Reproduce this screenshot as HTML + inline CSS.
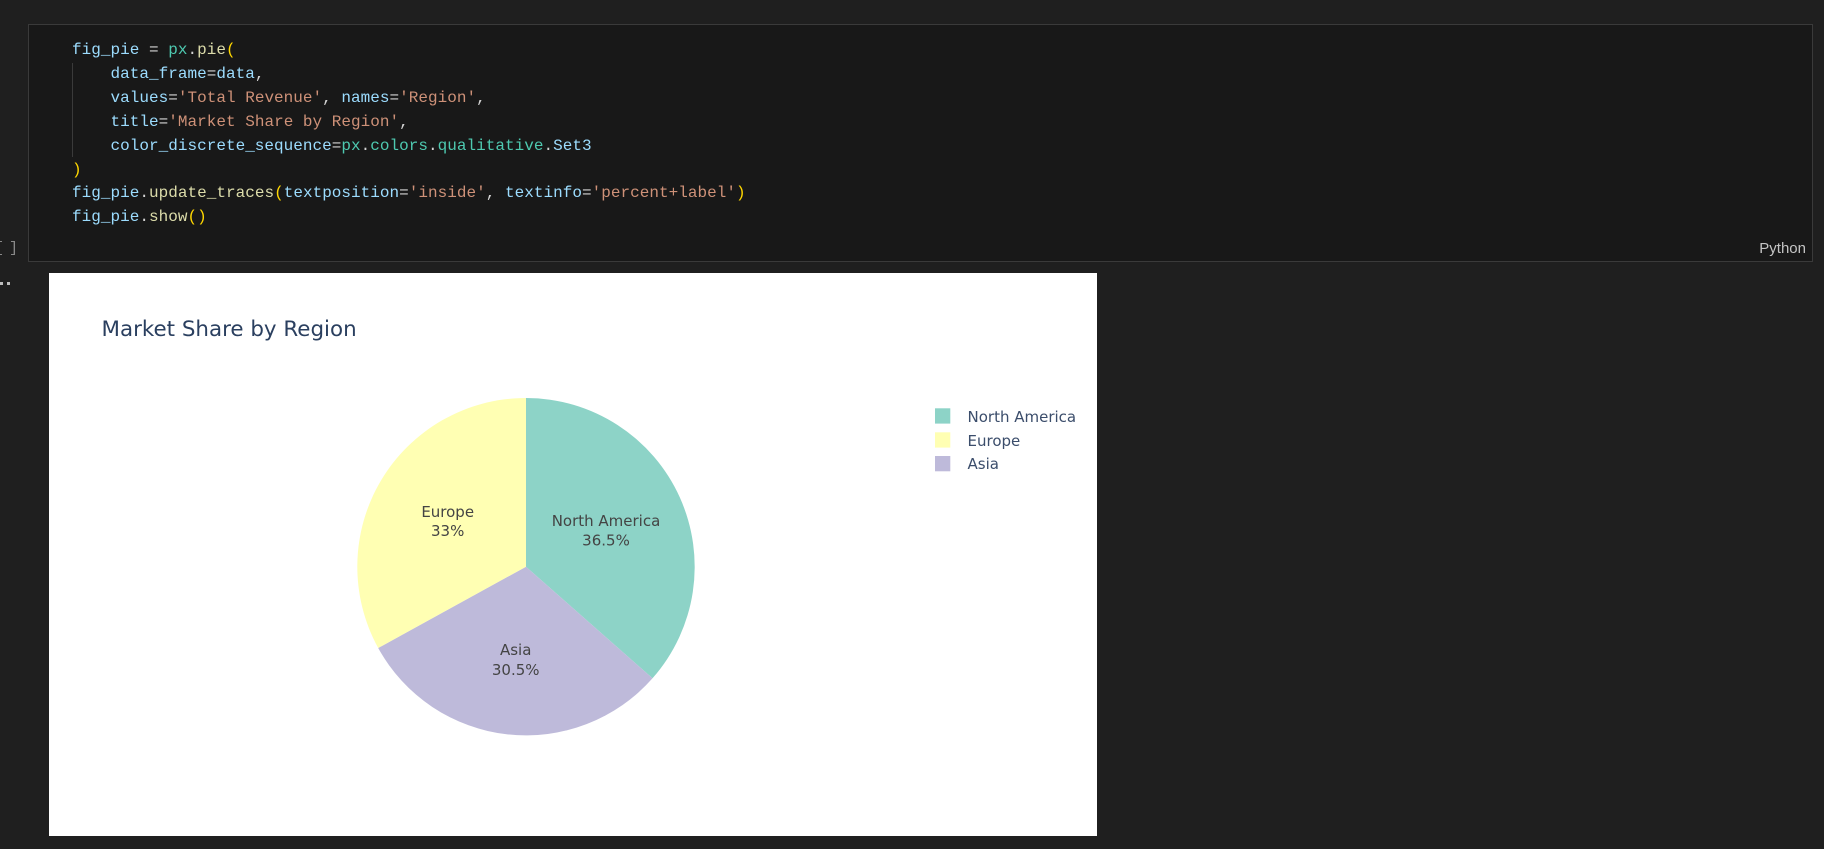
<!DOCTYPE html>
<html lang="en">
<head>
<meta charset="utf-8">
<title>Market Share by Region</title>
<style>
html,body{margin:0;padding:0;width:1824px;height:849px;overflow:hidden;background:#1f1f1f}
#cell{position:absolute;left:28px;top:24px;width:1783px;height:236px;background:#181818;border:1px solid #3a3a3a}
#code{position:absolute;left:72px;top:0;margin:0;font-family:"Liberation Mono",monospace;font-size:16px;letter-spacing:.02px;color:#9cdcfe}
#code div{position:absolute;left:0;white-space:pre;line-height:20px;height:20px}
.w{color:#d4d4d4}.m{color:#4ec9b0}.f{color:#dcdcaa}.s{color:#ce9178}.b{color:#ffd700}
#guide{position:absolute;left:72px;top:63px;width:1px;height:94px;background:#3a3a3a}
#lang{position:absolute;right:18px;top:239px;font:15px/20px "Liberation Sans",sans-serif;color:#c4c4c4}
.prompt{position:absolute;top:239px;font:15px/20px "Liberation Mono",monospace;color:#8a8a8a}
.dot{position:absolute;top:282px;width:3px;height:3px;background:#bdbdbd}
#plot{position:absolute;left:49px;top:273px;width:1048px;height:563px;background:#fff}
svg{position:absolute;left:0;top:0}
text{font-family:"DejaVu Sans",sans-serif}
</style>
</head>
<body>
<div id="cell"></div>
<div id="guide"></div>
<div id="code">
<div style="top:40px">fig_pie <span class="w">=</span> <span class="m">px</span><span class="w">.</span><span class="f">pie</span><span class="b">(</span></div>
<div style="top:64px">    data_frame<span class="w">=</span>data<span class="w">,</span></div>
<div style="top:88px">    values<span class="w">=</span><span class="s">'Total Revenue'</span><span class="w">,</span> names<span class="w">=</span><span class="s">'Region'</span><span class="w">,</span></div>
<div style="top:112px">    title<span class="w">=</span><span class="s">'Market Share by Region'</span><span class="w">,</span></div>
<div style="top:136px">    color_discrete_sequence<span class="w">=</span><span class="m">px</span><span class="w">.</span><span class="m">colors</span><span class="w">.</span><span class="m">qualitative</span><span class="w">.</span>Set3</div>
<div style="top:160px"><span class="b">)</span></div>
<div style="top:183px">fig_pie<span class="w">.</span><span class="f">update_traces</span><span class="b">(</span>textposition<span class="w">=</span><span class="s">'inside'</span><span class="w">,</span> textinfo<span class="w">=</span><span class="s">'percent+label'</span><span class="b">)</span></div>
<div style="top:207px">fig_pie<span class="w">.</span><span class="f">show</span><span class="b">()</span></div>
</div>
<div id="lang">Python</div>
<div class="prompt" style="left:-5px">[</div>
<div class="prompt" style="left:9px">]</div>
<div class="dot" style="left:0"></div>
<div class="dot" style="left:7px"></div>
<div id="plot"></div>
<svg width="1824" height="849" viewBox="0 0 1824 849">
<path d="M526 566.7V398A168.7 168.7 0 0 1 652.5 678.3Z" fill="#8dd3c7"/>
<path d="M526 566.7L652.5 678.3A168.7 168.7 0 0 1 378.2 648Z" fill="#bebada"/>
<path d="M526 566.7L378.2 648A168.7 168.7 0 0 1 526 398Z" fill="#ffffb3"/>
<g font-size="15" fill="#444" text-anchor="middle">
<text x="606" y="526">North America</text>
<text x="606" y="545.5">36.5%</text>
<text x="447.7" y="517">Europe</text>
<text x="447.7" y="536">33%</text>
<text x="515.7" y="655">Asia</text>
<text x="515.7" y="675">30.5%</text>
</g>
<text x="101.5" y="336" font-size="21.4" fill="#2a3f5f">Market Share by Region</text>
<rect x="935" y="408.3" width="15.3" height="15.3" fill="#8dd3c7"/>
<rect x="935" y="432.3" width="15.3" height="15.3" fill="#ffffb3"/>
<rect x="935" y="456" width="15.3" height="15.3" fill="#bebada"/>
<g font-size="15" fill="#3b4d6b">
<text x="967.5" y="422">North America</text>
<text x="967.5" y="446">Europe</text>
<text x="967.5" y="469">Asia</text>
</g>
</svg>
</body>
</html>
